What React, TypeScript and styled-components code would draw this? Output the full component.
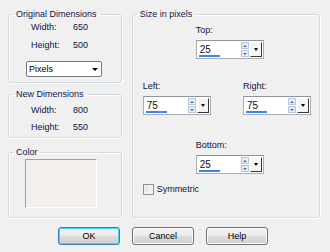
import React from 'react';
import styled, { createGlobalStyle } from 'styled-components';

const GlobalStyle = createGlobalStyle`
  html, body {
    margin: 0;
    padding: 0;
    background: #f0f0f0;
  }
  body {
    font-family: "Liberation Sans", Arial, sans-serif;
    font-size: 9px;
    color: #10103c;
  }
`;

const Dialog = styled.div`
  width: 330px;
  height: 252px;
  box-sizing: border-box;
  padding: 9px 10px 0 8px;
  display: flex;
  flex-direction: column;
`;

const Body = styled.div`
  display: flex;
  gap: 10px;
`;

const LeftColumn = styled.div`
  width: 114px;
  display: flex;
  flex-direction: column;
`;

const Group = styled.fieldset<{ $h: number; $mt?: number }>`
  margin: ${p => p.$mt ?? 0}px 0 0 0;
  padding: 0;
  height: ${p => p.$h}px;
  box-sizing: border-box;
  border: 1px solid #d0dae1;
  border-radius: 3px;
  box-shadow: inset 1px 1px 0 #fff, 1px 1px 0 #fff;
  min-width: 0;
  position: relative;
`;

const Legend = styled.legend`
  margin-left: 4px;
  padding: 0 3px;
  font-size: 9px;
  line-height: 11px;
  color: #10104a;
`;

const InfoGrid = styled.div<{ $pt: number; $rowGap: number }>`
  display: grid;
  grid-template-columns: 42px auto;
  row-gap: ${p => p.$rowGap}px;
  padding: ${p => p.$pt}px 0 0 22px;
  line-height: 11px;
`;

const Value = styled.span`
  color: #10103c;
`;

const Select = styled.div`
  margin: 10px 0 0 17px;
  width: 76px;
  height: 16px;
  box-sizing: border-box;
  background: #fff;
  border: 1px solid #7a7a7a;
  border-radius: 2px;
  display: flex;
  align-items: center;
  justify-content: space-between;
  padding: 0 3px 0 2px;
  color: #000;
  font-size: 9px;
`;

const Caret = styled.span`
  width: 0;
  height: 0;
  border-left: 3px solid transparent;
  border-right: 3px solid transparent;
  border-top: 3px solid #000;
`;

const Swatch = styled.div`
  margin: 1px 0 0 16px;
  width: 72px;
  height: 49px;
  box-sizing: border-box;
  background: #f3efec;
  border-top: 1px solid #a0a0a0;
  border-left: 1px solid #a0a0a0;
  border-right: 1px solid #fff;
  border-bottom: 1px solid #fff;
`;

const SizeGroup = styled(Group)`
  width: 189px;
`;

const SizeBody = styled.div`
  display: flex;
  flex-direction: column;
  padding: 5px 8px 0 10px;
`;

const Field = styled.div<{ $ml?: number; $mt?: number }>`
  display: flex;
  flex-direction: column;
  gap: 4px;
  margin-left: ${p => p.$ml ?? 0}px;
  margin-top: ${p => p.$mt ?? 0}px;
`;

const FieldLabel = styled.span`
  line-height: 11px;
  color: #10103c;
`;

const FieldRow = styled.div`
  display: flex;
  justify-content: space-between;
  margin-top: 22px;
`;

const Spin = styled.div`
  width: 68px;
  height: 19px;
  box-sizing: border-box;
  background: #fff;
  border: 1px solid #a9afb8;
  border-top-color: #8e949c;
  display: flex;
  align-items: stretch;
  padding: 1px;
`;

const SpinText = styled.div`
  flex: 1;
  position: relative;
  font-size: 10px;
  color: #1a0a0a;
  padding: 2px 0 0 2px;
  line-height: 11px;
`;

const Underline = styled.div`
  position: absolute;
  left: 1px;
  bottom: 0;
  width: 21px;
  height: 2px;
  background: #3a88e2;
`;

const Arrows = styled.div`
  width: 8px;
  display: flex;
  flex-direction: column;
  gap: 1px;
  margin-right: 1px;
`;

const ArrowBox = styled.div`
  flex: 1;
  background: #e6eef8;
  border: 1px solid #b7c6da;
  display: flex;
  align-items: center;
  justify-content: center;
`;

const Tri = styled.span<{ $up?: boolean }>`
  width: 0;
  height: 0;
  border-left: 2px solid transparent;
  border-right: 2px solid transparent;
  ${p => (p.$up ? 'border-bottom: 2px solid #4a6aa8;' : 'border-top: 2px solid #4a6aa8;')}
`;

const DropBtn = styled.div`
  width: 10px;
  background: #f4f4f4;
  border-right: 1px solid #3a3a3a;
  border-bottom: 1px solid #3a3a3a;
  border-top: 1px solid #fff;
  border-left: 1px solid #fff;
  display: flex;
  align-items: center;
  justify-content: center;
`;

const BlackTri = styled.span`
  width: 0;
  height: 0;
  border-left: 2px solid transparent;
  border-right: 2px solid transparent;
  border-top: 3px solid #000;
`;

const CheckRow = styled.label`
  display: flex;
  align-items: center;
  gap: 3px;
  margin-top: 10px;
  line-height: 11px;
  color: #10103c;
`;

const CheckBox = styled.span`
  width: 11px;
  height: 11px;
  box-sizing: border-box;
  border: 1px solid #8f8f8f;
  background: linear-gradient(135deg, #dcdcdc, #fbfbfb);
  box-shadow: inset 0 0 0 1px #f4f4f4;
`;

const Buttons = styled.div`
  display: flex;
  gap: 12px;
  padding: 9px 0 0 50px;
`;

const Button = styled.button<{ $focus?: boolean }>`
  width: 62px;
  height: 18px;
  box-sizing: border-box;
  padding: 0;
  border-radius: 3px;
  border: 1px solid ${p => (p.$focus ? '#3c7fb1' : '#707070')};
  box-shadow: inset 0 0 0 1px ${p => (p.$focus ? '#48d0f5' : '#fbfbfb')};
  background: linear-gradient(#f2f2f2 0%, #ebebeb 50%, #dddddd 51%, #cfcfcf 100%);
  font-family: "Liberation Sans", Arial, sans-serif;
  font-size: 9px;
  color: #000;
`;

const SpinField = ({ label, value }: { label: string; value: string }) => (
  <>
    <FieldLabel>{label}</FieldLabel>
    <Spin>
      <SpinText>
        {value}
        <Underline />
      </SpinText>
      <Arrows>
        <ArrowBox><Tri $up /></ArrowBox>
        <ArrowBox><Tri /></ArrowBox>
      </Arrows>
      <DropBtn><BlackTri /></DropBtn>
    </Spin>
  </>
);

export default function App() {
  return (
    <Dialog>
      <GlobalStyle />
      <Body>
        <LeftColumn>
          <Group $h={74}>
            <Legend>Original Dimensions</Legend>
            <InfoGrid $pt={2} $rowGap={7}>
              <span>Width:</span><Value>650</Value>
              <span>Height:</span><Value>500</Value>
            </InfoGrid>
            <Select>
              <span>Pixels</span>
              <Caret />
            </Select>
          </Group>
          <Group $h={49} $mt={6}>
            <Legend>New Dimensions</Legend>
            <InfoGrid $pt={5} $rowGap={6}>
              <span>Width:</span><Value>800</Value>
              <span>Height:</span><Value>550</Value>
            </InfoGrid>
          </Group>
          <Group $h={71} $mt={9}>
            <Legend>Color</Legend>
            <Swatch />
          </Group>
        </LeftColumn>
        <SizeGroup $h={209}>
          <Legend>Size in pixels</Legend>
          <SizeBody>
            <Field $ml={53}>
              <SpinField label="Top:" value="25" />
            </Field>
            <FieldRow>
              <Field>
                <SpinField label="Left:" value="75" />
              </Field>
              <Field>
                <SpinField label="Right:" value="75" />
              </Field>
            </FieldRow>
            <Field $ml={53} $mt={25}>
              <SpinField label="Bottom:" value="25" />
            </Field>
            <CheckRow>
              <CheckBox />
              Symmetric
            </CheckRow>
          </SizeBody>
        </SizeGroup>
      </Body>
      <Buttons>
        <Button $focus>OK</Button>
        <Button>Cancel</Button>
        <Button>Help</Button>
      </Buttons>
    </Dialog>
  );
}
